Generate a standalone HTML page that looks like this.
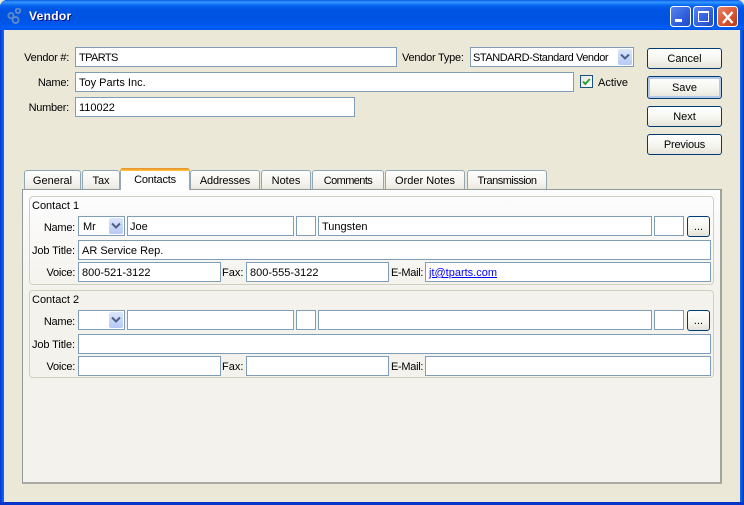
<!DOCTYPE html>
<html><head><meta charset="utf-8">
<style>
*{box-sizing:border-box}
html,body{margin:0;padding:0;width:744px;height:505px;overflow:hidden;background:#ece9d8}
body{font:11px "Liberation Sans",sans-serif;color:#000;position:relative}
#win{position:absolute;left:0;top:0;width:744px;height:505px;background:#0831d9;border-radius:7px 7px 0 0;overflow:hidden}
#tb{position:absolute;left:0;top:0;width:744px;height:30px;background:linear-gradient(#0058e6 0,#3a93ff 2px,#288eff 3px,#0a6af0 5px,#0055e5 9px,#0053e1 18px,#0055eb 24px,#0060f8 27px,#0055e8 30px)}
#ttl{position:absolute;left:29px;top:9px;color:#fff;font:bold 12px "Liberation Sans",sans-serif;letter-spacing:.3px;text-shadow:1px 1px 0 #0f1089}
#lb{position:absolute;left:0;top:30px;width:4px;height:475px;background:linear-gradient(90deg,#0831d9,#0855ee 2px,#166aee)}
#rb{position:absolute;left:740px;top:30px;width:4px;height:475px;background:linear-gradient(90deg,#166aee,#0855dd 2px,#0831b9)}
#bb{position:absolute;left:0;top:502px;width:744px;height:3px;background:#0835c9}
#c{position:absolute;left:4px;top:30px;width:736px;height:472px;background:#ebe8d8}
.a{position:absolute}
.l{position:absolute;white-space:nowrap;line-height:14px;height:14px;margin-top:1px}
.r{text-align:right;letter-spacing:-.25px}
.i{position:absolute;background:#fff;border:1px solid #7f9db9;height:20px;line-height:20px;padding-left:3px;white-space:nowrap;overflow:hidden}
.ar{position:absolute;width:14px;height:16px;background:linear-gradient(#dce6fb,#b6c9f6);border-radius:2px}
.b{position:absolute;left:647px;width:75px;text-align:center;border:1px solid #003c74;border-radius:3px;background:linear-gradient(#fff,#f4f4ee 60%,#e6e2d6);line-height:21px}
.t{position:absolute;top:170px;height:19px;text-align:center;line-height:20px;border:1px solid #91a7b4;border-bottom:0;border-radius:3px 3px 0 0;background:linear-gradient(#fff,#f3f2ec 70%,#e9e7dd)}
.g{position:absolute;left:29px;width:685px;border:1px solid #d0d0bf;border-radius:4px}
a{color:#00f;text-decoration:underline}
</style></head><body>
<div id="win">
<div id="tb"></div>
<div id="lb"></div><div id="rb"></div><div id="bb"></div>
<svg class="a" style="left:7px;top:8px" width="16" height="16" viewBox="0 0 16 16" fill="none" stroke="#5a88c8" stroke-width="2"><circle cx="4" cy="7.6" r="2.6"/><circle cx="11" cy="2.8" r="2.3"/><circle cx="8.6" cy="12" r="3"/></svg>
<div id="ttl">Vendor</div>
<svg class="a" style="left:670px;top:6px" width="69" height="21" viewBox="0 0 69 21">
<defs>
<linearGradient id="bl" x1="0" y1="0" x2="1" y2="1"><stop offset="0" stop-color="#5a85ee"/><stop offset=".6" stop-color="#2f5fdc"/><stop offset="1" stop-color="#2447c4"/></linearGradient>
<linearGradient id="rd" x1="0" y1="0" x2="1" y2="1"><stop offset="0" stop-color="#e9866a"/><stop offset=".6" stop-color="#d5532f"/><stop offset="1" stop-color="#b8371a"/></linearGradient>
</defs>
<rect x=".5" y=".5" width="20" height="20" rx="3" fill="url(#bl)" stroke="#fff"/>
<rect x="5" y="13" width="7" height="3" fill="#fff"/>
<rect x="23.5" y=".5" width="20" height="20" rx="3" fill="url(#bl)" stroke="#fff"/>
<rect x="28.5" y="5.5" width="10" height="10" fill="none" stroke="#fff"/><rect x="28" y="5" width="11" height="2" fill="#fff"/>
<rect x="47.5" y=".5" width="20" height="20" rx="3" fill="url(#rd)" stroke="#fff"/>
<path d="M53 6l9.5 11M62.5 6l-9.5 11" stroke="#fff" stroke-width="2.4" fill="none"/>
</svg>
<div id="c"></div>

<div class="l r" style="left:4px;width:65px;top:50px">Vendor #:</div>
<div class="i" style="left:75px;top:47px;width:322px;letter-spacing:-.6px">TPARTS</div>
<div class="l" style="left:402px;top:50px;letter-spacing:-.25px">Vendor Type:</div>
<div class="i" style="left:470px;top:47px;width:164px;padding-left:2px;letter-spacing:-.45px">STANDARD-Standard Vendor</div>
<div class="ar" style="left:618px;top:49px"></div>
<svg class="a" style="left:620px;top:53px" width="10" height="8" viewBox="0 0 10 8"><path d="M1 1.5l4 4 4-4" fill="none" stroke="#4d6185" stroke-width="2"/></svg>

<div class="l r" style="left:4px;width:65px;top:75px">Name:</div>
<div class="i" style="left:75px;top:72px;width:499px">Toy Parts Inc.</div>
<div class="a" style="left:580px;top:75px;width:13px;height:13px;border:1px solid #1c5180;background:linear-gradient(135deg,#e6e5dd,#fff)"></div>
<svg class="a" style="left:580px;top:75px" width="13" height="13" viewBox="0 0 13 13"><path d="M3 6.5l2.3 2.5 4.5-5" fill="none" stroke="#21a121" stroke-width="1.8"/></svg>
<div class="l" style="left:598px;top:75px">Active</div>

<div class="l r" style="left:4px;width:65px;top:100px">Number:</div>
<div class="i" style="left:75px;top:97px;width:280px">110022</div>

<div class="b" style="top:48px;height:21px">Cancel</div>
<div class="b" style="top:76px;height:23px;line-height:23px;box-shadow:inset 0 0 0 2px #b4c8ea">Save</div>
<div class="b" style="top:106px;height:21px">Next</div>
<div class="b" style="top:134px;height:21px;letter-spacing:-.2px">Previous</div>

<div class="a" style="left:22px;top:189px;width:700px;height:295px;border:1px solid #919b9c;border-right:2px solid #a0a59c;border-bottom:2px solid #a9aca4;background:linear-gradient(#fdfdfe,#f4f2ec 35%,#f4f2ec)"></div>

<div class="t" style="left:24px;width:57px">General</div>
<div class="t" style="left:82px;width:38px">Tax</div>
<div class="t" style="left:261px;width:50px">Notes</div>
<div class="t" style="left:190px;width:70px;letter-spacing:-.2px">Addresses</div>
<div class="t" style="left:312px;width:72px;letter-spacing:-.6px">Comments</div>
<div class="t" style="left:385px;width:80px">Order Notes</div>
<div class="t" style="left:467px;width:80px;letter-spacing:-.5px">Transmission</div>
<div class="a" style="left:120px;top:168px;width:70px;height:22px;text-align:center;line-height:24px;letter-spacing:-.2px;background:#fefefe;border:1px solid #91a7b4;border-bottom:0;border-top:0;border-radius:3px 3px 0 0">Contacts</div>
<div class="a" style="left:120px;top:168px;width:70px;height:3px;background:linear-gradient(#e68b2c,#ffc73c);border-radius:3px 3px 0 0"></div>

<div class="g" style="top:196px;height:89px"></div>
<div class="g" style="top:290px;height:88px"></div>

<div class="l" style="left:32px;top:198px">Contact 1</div>
<div class="l r" style="left:20px;width:55px;top:220px">Name:</div>
<div class="i" style="left:78px;top:216px;width:47px;padding-left:4px">Mr</div>
<div class="ar" style="left:109px;top:218px"></div>
<svg class="a" style="left:111px;top:222px" width="10" height="8" viewBox="0 0 10 8"><path d="M1 1.5l4 4 4-4" fill="none" stroke="#4d6185" stroke-width="2"/></svg>
<div class="i" style="left:127px;top:216px;width:167px;padding-left:2px">Joe</div>
<div class="i" style="left:296px;top:216px;width:20px"></div>
<div class="i" style="left:318px;top:216px;width:334px">Tungsten</div>
<div class="i" style="left:654px;top:216px;width:30px"></div>
<div class="b" style="left:687px;top:216px;width:23px;height:21px;border-width:1px;line-height:21px">...</div>
<div class="l r" style="left:20px;width:55px;top:243px;letter-spacing:-.1px">Job Title:</div>
<div class="i" style="left:78px;top:240px;width:633px">AR Service Rep.</div>
<div class="l r" style="left:20px;width:55px;top:265px">Voice:</div>
<div class="i" style="left:78px;top:262px;width:143px">800-521-3122</div>
<div class="l" style="left:222px;top:265px">Fax:</div>
<div class="i" style="left:246px;top:262px;width:143px">800-555-3122</div>
<div class="l" style="left:391px;top:265px;letter-spacing:-.3px">E-Mail:</div>
<div class="i" style="left:425px;top:262px;width:286px"><a>jt@tparts.com</a></div>

<div class="l" style="left:32px;top:292px">Contact 2</div>
<div class="l r" style="left:20px;width:55px;top:314px">Name:</div>
<div class="i" style="left:78px;top:310px;width:47px"></div>
<div class="ar" style="left:109px;top:312px"></div>
<svg class="a" style="left:111px;top:316px" width="10" height="8" viewBox="0 0 10 8"><path d="M1 1.5l4 4 4-4" fill="none" stroke="#4d6185" stroke-width="2"/></svg>
<div class="i" style="left:127px;top:310px;width:167px"></div>
<div class="i" style="left:296px;top:310px;width:20px"></div>
<div class="i" style="left:318px;top:310px;width:334px"></div>
<div class="i" style="left:654px;top:310px;width:30px"></div>
<div class="b" style="left:687px;top:310px;width:23px;height:21px;line-height:21px">...</div>
<div class="l r" style="left:20px;width:55px;top:337px;letter-spacing:-.1px">Job Title:</div>
<div class="i" style="left:78px;top:334px;width:633px"></div>
<div class="l r" style="left:20px;width:55px;top:359px">Voice:</div>
<div class="i" style="left:78px;top:356px;width:143px"></div>
<div class="l" style="left:222px;top:359px">Fax:</div>
<div class="i" style="left:246px;top:356px;width:143px"></div>
<div class="l" style="left:391px;top:359px;letter-spacing:-.3px">E-Mail:</div>
<div class="i" style="left:425px;top:356px;width:286px"></div>
</div>
</body></html>
